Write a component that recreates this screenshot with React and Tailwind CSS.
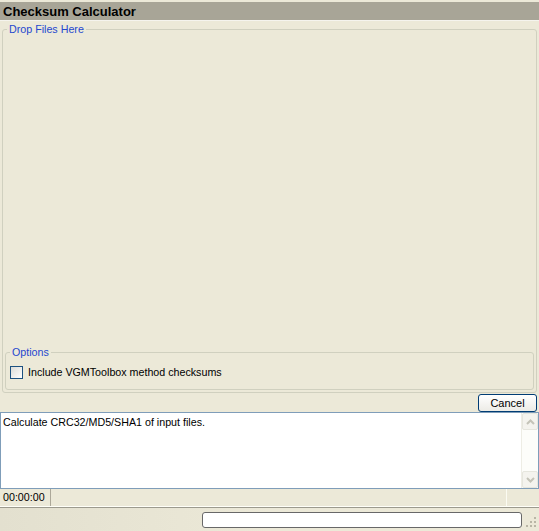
export default function App() {
  return (
    <div className="w-[539px] h-[531px] bg-[#ece9d8] flex flex-col overflow-hidden text-[10.7px] text-black" style={{ fontFamily: '"Liberation Sans", Arial, sans-serif' }}>
      {/* title bar */}
      <div className="h-[2px] shrink-0 bg-[#ece9d8]" />
      <div className="h-[18px] shrink-0 bg-[#a8a597] flex items-center px-[3px] text-[13px] font-bold leading-none">
        Checksum Calculator
      </div>
      <div className="h-[1px] shrink-0 bg-[#f5f4ee]" />

      {/* drop files group */}
      <div className="flex-1 flex flex-col px-[2px] pt-[2px] min-h-0">
        <fieldset className="flex-1 border border-[#d0d0bf] rounded-[3px] px-[2px] pb-[2px] flex flex-col justify-end min-h-0">
          <legend className="ml-[2px] px-[2px] text-[#2447cf] leading-[12px]">Drop Files Here</legend>
          <fieldset className="border border-[#d0d0bf] rounded-[3px] h-[44px] px-[3px]">
            <legend className="ml-[1px] px-[2px] text-[#2447cf] leading-[12px]">Options</legend>
            <label className="flex items-center gap-[5px] mt-[6px] ml-[1px]">
              <span className="w-[13px] h-[13px] border border-[#1c5180] bg-gradient-to-br from-[#dcdcd7] to-white" />
              <span>Include VGMToolbox method checksums</span>
            </label>
          </fieldset>
        </fieldset>
        <div className="flex justify-end pt-[1px]">
          <button className="w-[59px] h-[18px] border border-[#003c74] rounded-[3px] bg-gradient-to-b from-white to-[#ecebe6] leading-none text-[11px]">
            Cancel
          </button>
        </div>
      </div>

      {/* output box */}
      <div className="h-[77px] shrink-0 border border-[#7f9db9] bg-white flex">
        <div className="flex-1 px-[2px] pt-[1px]">Calculate CRC32/MD5/SHA1 of input files.</div>
        <div className="w-[17px] flex flex-col justify-between bg-[#fdfdfa] border-l border-[#eeede5]">
          <div className="h-[17px] border border-[#e6e6de] rounded-[2px] bg-[#f4f3ee] flex items-center justify-center">
            <svg width="9" height="6" viewBox="0 0 9 6"><path d="M1 5 L4.5 1.5 L8 5" stroke="#c4c3b8" strokeWidth="2" fill="none" /></svg>
          </div>
          <div className="h-[17px] border border-[#e6e6de] rounded-[2px] bg-[#f4f3ee] flex items-center justify-center">
            <svg width="9" height="6" viewBox="0 0 9 6"><path d="M1 1 L4.5 4.5 L8 1" stroke="#c4c3b8" strokeWidth="2" fill="none" /></svg>
          </div>
        </div>
      </div>

      {/* status */}
      <div className="h-[18px] shrink-0 flex items-stretch border-b border-[#fffff8]">
        <div className="w-[51px] pl-[3px] flex items-center border-r border-[#aca899]">00:00:00</div>
        <div className="w-[456px] border-r border-[#fbfbf2]" />
      </div>
      <div className="h-[1px] shrink-0 bg-[#9c9a8e]" />

      {/* bottom strip */}
      <div className="h-[23px] shrink-0 bg-gradient-to-r from-[#e3e0cf] via-[#ece9d8] to-[#ece9d8] flex items-center pl-[202px] pr-[2px] relative">
        <div className="w-[320px] h-[16px] border border-[#686868] rounded-[3px] bg-white" />
        <svg className="absolute right-[2px] bottom-[3px]" width="11" height="11" viewBox="0 0 11 11">
          <g fill="#b9b6a6">
            <rect x="8" y="0" width="2" height="2" />
            <rect x="8" y="4" width="2" height="2" />
            <rect x="4" y="4" width="2" height="2" />
            <rect x="8" y="8" width="2" height="2" />
            <rect x="4" y="8" width="2" height="2" />
            <rect x="0" y="8" width="2" height="2" />
          </g>
        </svg>
      </div>
    </div>
  );
}
